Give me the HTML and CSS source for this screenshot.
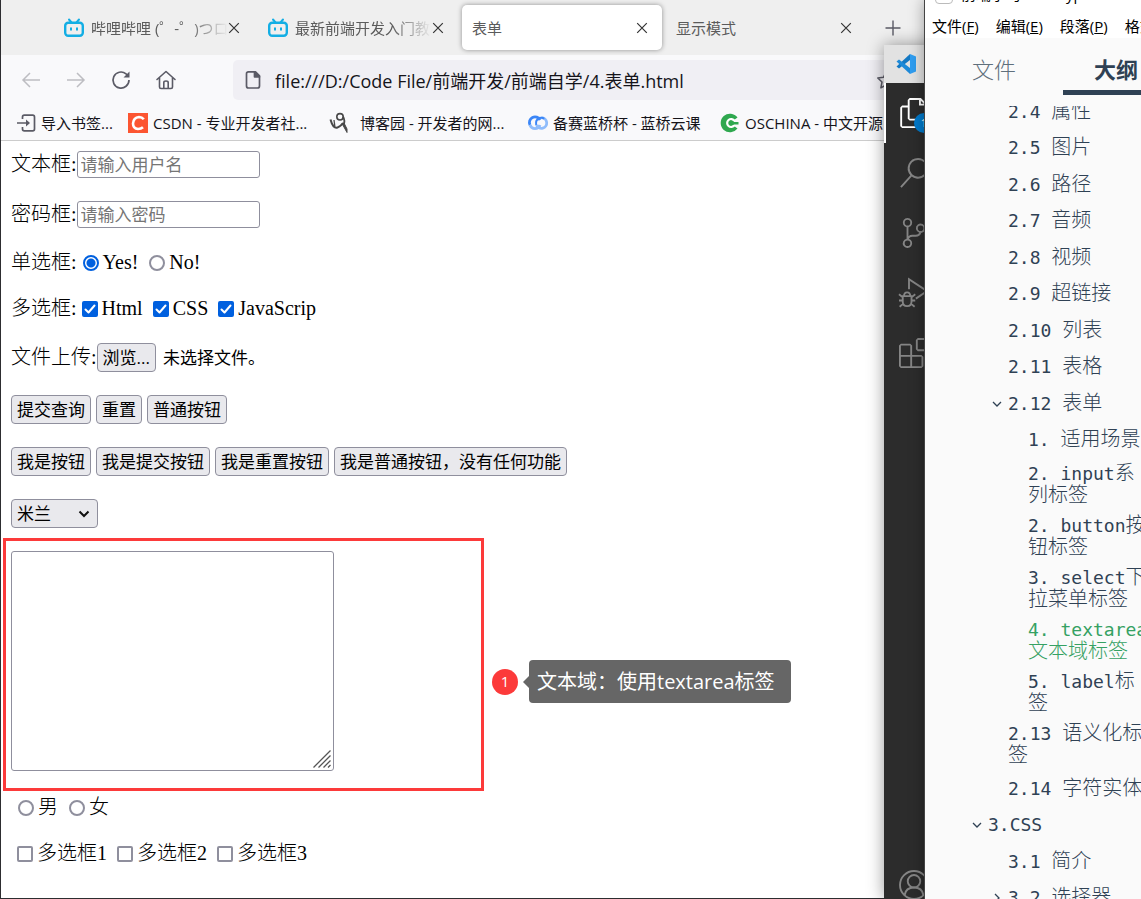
FILE: index.html
```html
<!DOCTYPE html>
<html lang="zh-CN">
<head>
<meta charset="utf-8">
<title>表单</title>
<link rel="stylesheet" href="styles.css">
</head>
<body>
<svg class="defs" aria-hidden="true">
  <symbol id="bili" viewBox="0 0 20 20"><path d="M5 1.5l2.5 3M15 1.5l-2.5 3" stroke="#13aee4" stroke-width="2" stroke-linecap="round"/><rect x="1.2" y="4.8" width="17.6" height="13" rx="3" fill="none" stroke="#13aee4" stroke-width="2.4"/><path d="M7 9.5v3M13 9.5v3" stroke="#13aee4" stroke-width="2"/></symbol>
  <symbol id="close" viewBox="0 0 12 12"><path d="M1.2 1.2l9.6 9.6M10.8 1.2l-9.6 9.6" stroke="#333" stroke-width="1.2"/></symbol>
  <symbol id="tick" viewBox="0 0 16 16"><path d="M3.5 8.5l3 3L12.500 4.500" fill="none" stroke="#fff" stroke-width="2" stroke-linecap="round" stroke-linejoin="round"/></symbol>
</svg>
<div class="desktop">
  <section class="window browser">
    <div class="tabs">
      <div class="tab"><svg class="ico20"><use href="#bili"/></svg><span class="tab-title fade">哔哩哔哩 (゜-゜)つロ</span><button class="tab-close" aria-label="关闭"><svg><use href="#close"/></svg></button></div>
      <div class="tab"><svg class="ico20"><use href="#bili"/></svg><span class="tab-title fade">最新前端开发入门教程</span><button class="tab-close" aria-label="关闭"><svg><use href="#close"/></svg></button></div>
      <div class="tab active"><span class="tab-title">表单</span><button class="tab-close" aria-label="关闭"><svg><use href="#close"/></svg></button></div>
      <div class="tab"><span class="tab-title">显示模式</span><button class="tab-close" aria-label="关闭"><svg><use href="#close"/></svg></button></div>
      <button class="new-tab" aria-label="新标签页"><svg class="ico16" viewBox="0 0 16 16"><path d="M8 .5v15M.5 8h15" stroke="#5b5b66" stroke-width="1.4"/></svg></button>
    </div>
    <div class="toolbar">
      <div class="nav">
        <button aria-label="后退"><svg class="ico20" viewBox="0 0 20 20" fill="none" stroke="#bdbdc2" stroke-width="1.5"><path d="M19 10H2M9 3l-7 7 7 7"/></svg></button>
        <button aria-label="前进"><svg class="ico20" viewBox="0 0 20 20" fill="none" stroke="#bdbdc2" stroke-width="1.500"><path d="M1 10h17M11 3l7 7-7 7"/></svg></button>
        <button aria-label="刷新"><svg class="ico20" viewBox="0 0 20 20" fill="none" stroke="#5b5b66" stroke-width="1.700"><path d="M18 10a8 8 0 1 1-3-6.200L17 6"/><path d="M18.500 1.500V7.500H12.500z" fill="#5b5b66" stroke="none"/></svg></button>
        <button aria-label="主页"><svg class="ico20" viewBox="0 0 20 20" fill="none" stroke="#5b5b66" stroke-width="1.600" stroke-linejoin="round" stroke-linecap="round"><path d="M1 9.500L10 1.500l9 8M3.500 7.500V17q0 1.500 1.500 1.500h10q1.500 0 1.500-1.500V7.500M7.800 18v-5.500q0-1.500 2.200-1.500t2.200 1.500V18"/></svg></button>
      </div>
      <div class="url"><svg class="ico20" viewBox="0 0 20 20" fill="none" stroke="#5b5b66" stroke-width="1.700" stroke-linejoin="round"><path d="M5 1.800h7.500l4 4V16q0 2-2 2h-9q-2 0-2-2V3.800q0-2 2-2z"/><path d="M11.500 1.800v5h5z" fill="#5b5b66"/></svg><input type="text" aria-label="地址" value="file:///D:/Code File/前端开发/前端自学/4.表单.html"><svg class="ico20 star" viewBox="0 0 20 20" fill="none" stroke="#5b5b66" stroke-width="1.500" stroke-linejoin="round"><path d="M10 2l2.500 5.300 5.700.7-4.200 4 1.100 5.800L10 15l-5.100 2.800L6 12 1.800 8l5.700-.7z"/></svg></div>
    </div>
    <nav class="bookmarks">
      <a href="#"><svg class="ico20" viewBox="0 0 20 20" fill="none" stroke="#5b5b66" stroke-width="1.700"><path d="M6.500 6V4q0-1.800 1.800-1.800h8.400q1.800 0 1.800 1.800v12q0 1.800-1.800 1.800H8.300Q6.500 17.800 6.500 16v-2M1 10h12"/><path d="M10 6.500v7l4-3.500z" fill="#5b5b66" stroke="none"/></svg>导入书签...</a>
      <a href="#"><svg class="ico20" viewBox="0 0 20 20"><path fill="#fc5531" d="M0 0h20v20H0z"/><path d="M15.800 6.200Q14 4 11 4 5.500 4.500 5 10.500q0 5 5 5.500 3 0 5-1.800" fill="none" stroke="#fff" stroke-width="2.600"/></svg>CSDN - 专业开发者社...</a>
      <a href="#" class="wide-icon"><svg class="ico20" viewBox="0 0 20 20" fill="none" stroke="#484848"><circle cx="10" cy="3.800" r="3.200" stroke-width="1.600"/><path d="M13 3.500q2.500 4.500.5 8.500" stroke-width="1.800"/><path d="M13 10q-3 4-5.500 4.500Q3 16 .5 6.500" stroke-width="2"/><path d="M4 7l.8 6" stroke-width="1.300"/><path d="M12 10.500l5 9V16l-3-6z" fill="#484848" stroke-width="1"/></svg>博客园 - 开发者的网...</a>
      <a href="#"><svg class="ico20" viewBox="0 0 20 20" fill="none" stroke-width="2.800"><path d="M12 7A5.300 5.300 0 1 0 2 12" stroke="#3b86f7"/><path d="M2 12a5.300 5.300 0 0 0 10 0" stroke="#8fbcfb"/><path d="M8.500 12a5.300 5.300 0 1 0 5-7.300" stroke="#8fbcfb"/><path d="M8.200 12q-1-5 3-7 3-1 5 .8" stroke="#3b86f7" stroke-width="2"/></svg>备赛蓝桥杯 - 蓝桥云课</a>
      <a href="#"><svg class="ico20" viewBox="0 0 20 20"><path d="M17.500 4.500A9.300 9.300 0 1 0 17.500 15.500L14 13V7z" fill="#2fa84f"/><path d="M14.500 7.800a4 4 0 1 0 0 4.400" fill="none" stroke="#fff" stroke-width="2.200"/><path d="M10.500 9h8v2.500h-8z" fill="#2fa84f"/></svg>OSCHINA - 中文开源</a>
    </nav>
    <form class="page">
      <div class="row field"><label for="user">文本框:</label><input class="text" id="user" type="text" placeholder="请输入用户名"></div>
      <div class="row field"><label for="pwd">密码框:</label><input class="text" id="pwd" type="password" placeholder="请输入密码"></div>
      <div class="row choices"><span class="legend">单选框:</span>
        <label><input type="radio" name="yn" checked>Yes!</label><label><input type="radio" name="yn">No!</label></div>
      <div class="row choices"><span class="legend">多选框:</span>
        <label><span class="box"><input type="checkbox" checked><svg><use href="#tick"/></svg></span>Html</label><label><span class="box"><input type="checkbox" checked><svg><use href="#tick"/></svg></span>CSS</label><label><span class="box"><input type="checkbox" checked><svg><use href="#tick"/></svg></span>JavaScrip</label></div>
      <div class="row field"><span>文件上传:</span><label class="btn file" for="upload">浏览...</label><input class="file-input" id="upload" type="file"><span class="file-name">未选择文件。</span></div>
      <div class="row buttons"><button class="btn" type="submit">提交查询</button><button class="btn" type="reset">重置</button><button class="btn" type="button">普通按钮</button></div>
      <div class="row buttons"><button class="btn">我是按钮</button><button class="btn" type="submit">我是提交按钮</button><button class="btn" type="reset">我是重置按钮</button><button class="btn" type="button">我是普通按钮，没有任何功能</button></div>
      <div class="row"><span class="select"><select class="btn" aria-label="城市"><option>米兰</option></select><svg viewBox="0 0 12 8" fill="none" stroke="#111" stroke-width="2"><path d="M1.500 1.500L6 6l4.500-4.500"/></svg></span></div>
      <div class="row area">
        <span class="area-box"><textarea aria-label="文本域"></textarea><svg class="grip" viewBox="0 0 18 18" stroke="#555" stroke-width="1.300"><path d="M.5 17.500l17-17M5.500 17.500l12-12M10.500 17.500l7-7M15 17.500l2.500-2.500"/></svg></span>
        <div class="frame"></div>
        <div class="note"><span class="badge">1</span><span class="tip">文本域：使用textarea标签</span></div>
      </div>
      <div class="row choices indent"><label><input type="radio" name="sex">男</label><label><input type="radio" name="sex">女</label></div>
      <div class="row choices indent"><label><span class="box"><input type="checkbox"></span>多选框1</label><label><span class="box"><input type="checkbox"></span>多选框2</label><label><span class="box"><input type="checkbox"></span>多选框3</label></div>
    </form>
  </section>

  <section class="window editor">
    <div class="editor-title"><svg class="ico20" viewBox="0 0 20 20"><path d="M14 0l6 2.500v15L14 20z" fill="#2f9df0"/><path d="M14 0v6L3 14.500.5 12.500z" fill="#1479c4"/><path d="M14 20v-6L3 5.500.5 7.500z" fill="#1e8ad8"/></svg></div>
    <div class="activity">
      <button class="on" aria-label="资源管理器"><svg viewBox="0 0 24 24"><path d="M17.500 0h-9L7 1.500V6H2.500L1 7.500v15.070L2.500 24h12.070L16 22.570V18h4.700l1.300-1.430V4.500L17.500 0zm0 2.120l2.380 2.380H17.500V2.120zm-3 20.380h-12v-15H7v9.070L8.500 18h6v4.500zm6-6h-12v-15H16V6h4.500v10.500z"/></svg><span class="count">1</span></button>
      <button aria-label="搜索"><svg viewBox="0 0 24 24"><path d="M15.250 0a8.250 8.250 0 0 0-6.180 13.720L1 22.880l1.120 1 8.050-9.120A8.251 8.251 0 1 0 15.250.01V0zm0 15a6.750 6.750 0 1 1 0-13.500 6.750 6.750 0 0 1 0 13.500z"/></svg></button>
      <button aria-label="源代码管理"><svg viewBox="0 0 24 24"><path d="M21.007 8.222A3.738 3.738 0 0 0 15.045 5.200a3.737 3.737 0 0 0 1.156 6.583 2.988 2.988 0 0 1-2.668 1.670h-2.990a4.456 4.456 0 0 0-2.989 1.165V7.400a3.737 3.737 0 1 0-1.494 0v9.117a3.776 3.776 0 1 0 1.816.099 2.990 2.990 0 0 1 2.668-1.667h2.990a4.484 4.484 0 0 0 4.223-3.039 3.736 3.736 0 0 0 3.250-3.687zM4.565 3.738a2.242 2.242 0 1 1 4.484 0 2.242 2.242 0 0 1-4.484 0zm4.484 16.441a2.242 2.242 0 1 1-4.484 0 2.242 2.242 0 0 1 4.484 0zm8.221-9.715a2.242 2.242 0 1 1 0-4.485 2.242 2.242 0 0 1 0 4.485z"/></svg></button>
      <button aria-label="运行和调试"><svg viewBox="0 0 24 24" class="line"><path d="M8 9V1l14.500 9.500-9 6"/><path d="M3 14.500h7v4.500q0 3.500-3.500 3.500T3 19zM4 14.500q0-3 2.500-3t2.500 3M0 13l3 2.500M13 13l-3 2.500M0 18h3M10 18h3M.5 23l3-2.500M12.500 23l-3-2.500"/></svg></button>
      <button aria-label="扩展"><svg viewBox="0 0 24 24"><path d="M13.500 1.500L15 0h7.500L24 1.500V9l-1.500 1.500H15L13.500 9V1.500zm1.500 0V9h7.500V1.500H15zM0 15V6l1.500-1.500H9L10.500 6v7.500H18l1.500 1.500v7.500L18 24H1.500L0 22.500V15zm9-1.500V6H1.500v7.500H9zM9 15H1.500v7.500H9V15zm1.500 7.500H18V15h-7.500v7.500z"/></svg></button>
      <button class="account" aria-label="帐户"><svg viewBox="0 0 24 24" class="line"><circle cx="12" cy="12" r="11.200"/><circle cx="12" cy="9" r="5"/><path d="M4.500 20q1-6 7.500-6t7.500 6"/></svg></button>
    </div>
  </section>

  <section class="window notes">
    <div class="notes-title"><span class="doc"></span><span>前端学习</span><span>- Typora</span></div>
    <div class="menu"><button>文件(<u>F</u>)</button><button>编辑(<u>E</u>)</button><button>段落(<u>P</u>)</button><button>格式(<u>O</u>)</button></div>
    <div class="side-tabs"><button>文件</button><button class="on">大纲</button></div>
    <div class="outline">
      <ul>
        <li class="l2"><a href="#"><b>2.4 </b>属性</a></li>
        <li class="l2"><a href="#"><b>2.5 </b>图片</a></li>
        <li class="l2"><a href="#"><b>2.6 </b>路径</a></li>
        <li class="l2"><a href="#"><b>2.7 </b>音频</a></li>
        <li class="l2"><a href="#"><b>2.8 </b>视频</a></li>
        <li class="l2"><a href="#"><b>2.9 </b>超链接</a></li>
        <li class="l2"><a href="#"><b>2.10 </b>列表</a></li>
        <li class="l2"><a href="#"><b>2.11 </b>表格</a></li>
        <li class="l2"><svg viewBox="0 0 10 10"><path d="M1 3l4 4 4-4"/></svg><a href="#"><b>2.12 </b>表单</a></li>
        <li class="l3"><a href="#"><b>1. </b>适用场景</a></li>
        <li class="l3 tall"><a href="#"><b>2. input</b>系列标签</a></li>
        <li class="l3 tall"><a href="#"><b>2. button</b>按钮标签</a></li>
        <li class="l3 tall"><a href="#"><b>3. select</b>下拉菜单标签</a></li>
        <li class="l3 tall current"><a href="#"><b>4. textarea</b>文本域标签</a></li>
        <li class="l3 tall"><a href="#"><b>5. label</b>标签</a></li>
        <li class="l2 tall"><a href="#"><b>2.13 </b>语义化标签</a></li>
        <li class="l2"><a href="#"><b>2.14 </b>字符实体</a></li>
        <li class="l1"><svg viewBox="0 0 10 10"><path d="M1 3l4 4 4-4"/></svg><a href="#"><b>3.CSS</b></a></li>
        <li class="l2"><a href="#"><b>3.1 </b>简介</a></li>
        <li class="l2"><svg viewBox="0 0 10 10"><path d="M3 1l4 4-4 4"/></svg><a href="#"><b>3.2 </b>选择器</a></li>
      </ul>
    </div>
  </section>
</div>
</body>
</html>
```
FILE: styles.css
```css
* { box-sizing: border-box; }
body {
  margin: 0;
  font-family: "Open Sans", "Noto Sans CJK SC", sans-serif;
  font-size: 15px;
  color: #15141a;
}
button, input, select, textarea { font: inherit; color: inherit; margin: 0; }
button { background: none; border: 0; padding: 0; }
a { color: inherit; text-decoration: none; }
svg { display: block; flex: none; overflow: visible; }
.defs { position: absolute; width: 0; height: 0; }
.ico20 { width: 20px; height: 20px; }
.ico16 { width: 16px; height: 16px; }

/* Windows on the desktop */
.desktop { position: relative; height: 100vh; overflow: hidden; background: #2c2c2c; }
.window { position: absolute; bottom: 0; overflow: hidden; }
.browser { inset: 0; background: #fff; border-left: 1px solid #2d2d30; border-bottom: 1px solid #2d2d30; }
.editor { top: 45px; right: 197px; width: 60px; background: #2c2c2c; box-shadow: 0 0 16px rgba(0, 0, 0, .4); }
.notes { top: 0; right: 0; width: 217px; background: #fafafa; border-left: 1px solid #444; box-shadow: 0 0 14px rgba(0, 0, 0, .35); }

/* Browser chrome */
.tabs { display: flex; gap: 4px; padding: 5px 0 5px 53px; background: #efefef; }
.tab { display: flex; align-items: center; width: 200px; height: 45px; padding: 0 14px 0 10px; border-radius: 5px; color: #5b5b5b; flex: none; }
.tab .ico20 { margin-right: 7px; }
.tab.active { background: #fff; box-shadow: 0 0 5px rgba(0, 0, 0, .4); }
.tab-title { flex: 1; min-width: 0; overflow: hidden; white-space: nowrap; line-height: 20px; }
.fade { -webkit-mask-image: linear-gradient(to left, transparent, #000 40px); mask-image: linear-gradient(to left, transparent, #000 40px); }
.tab-close svg { width: 12px; height: 12px; }
.new-tab { padding: 0 15px; }
.toolbar { display: flex; align-items: center; padding: 5px 0; background: #f9f9fb; }
.nav { display: flex; gap: 25px; padding-left: 20px; width: 232px; flex: none; }
.url { display: flex; align-items: center; gap: 12px; flex: 1; height: 40px; padding: 0 10px; margin-right: 235px; background: #f0eff4; border-radius: 5px; }
.url input { flex: 1; min-width: 0; border: 0; padding: 0; background: none; font-size: 18px; }
.bookmarks { display: grid; grid-template-columns: 96px 186px 182px 176px auto; gap: 16px; align-items: center; height: 36px; padding: 0 15px; background: #f9f9fb; border-bottom: 1px solid #ccc; white-space: nowrap; line-height: 20px; }
.bookmarks a { display: flex; align-items: center; gap: 5px; }
.bookmarks .wide-icon { gap: 10px; }

/* Form page */
.page { display: flex; flex-direction: column; gap: 23px; padding: 10px; font-family: "Liberation Serif", "Noto Sans CJK SC", serif; font-size: 20px; line-height: 23px; font-weight: 300; color: #000; }
.row { display: flex; align-items: center; white-space: nowrap; }
.text { width: 183px; height: 27px; padding: 0 3px; border: 1px solid #8f8f9d; border-radius: 3px; font: 17px "Open Sans", "Noto Sans CJK SC", sans-serif; }
.text::placeholder { color: #757575; }
.choices { gap: 10px; }
.legend { margin-right: -5px; }
.choices label { display: flex; align-items: center; gap: 4px; }
.indent { padding-left: 6px; }
.choices input { appearance: none; display: block; width: 16px; height: 16px; border: 2px solid #8f8f9d; background: #fff; }
.choices input[type="radio"] { margin-left: 1px; border-radius: 50%; }
.choices input[type="radio"]:checked { border-color: #0060df; background: radial-gradient(#0060df 4px, #fff 5px); }
.choices input[type="checkbox"] { border-radius: 2px; }
.choices input[type="checkbox"]:checked { border-color: #0060df; background: #0060df; }
.box { position: relative; }
.box svg { position: absolute; inset: 0; width: 16px; height: 16px; pointer-events: none; }
.buttons { gap: 5px; }
.btn { height: 29px; padding: 0 5px; border: 1px solid #8f8f9d; border-radius: 4px; background: #e9e9ed; font: 17px/28px "Open Sans", "Noto Sans CJK SC", sans-serif; color: #000; }
.file-input { position: absolute; width: 1px; height: 1px; opacity: 0; }
.file-name { padding-left: 7px; font: 17px/28px "Open Sans", "Noto Sans CJK SC", sans-serif; }
.select { position: relative; }
.select select { display: block; appearance: none; width: 87px; }
.select svg { position: absolute; right: 8px; top: 11px; width: 12px; height: 8px; pointer-events: none; }
.area { position: relative; padding-bottom: 2px; }
.area-box { position: relative; }
.area textarea { display: block; width: 323px; height: 220px; border: 1px solid #8f8f9d; border-radius: 3px; resize: none; background: #fff; }
.grip { position: absolute; right: 3px; bottom: 3px; width: 18px; height: 18px; pointer-events: none; }
.frame { position: absolute; left: -8px; top: -13px; bottom: -18px; width: 481px; border: 3px solid #fc3a3a; pointer-events: none; }
.note { position: absolute; left: 481px; top: 109px; display: flex; align-items: center; gap: 11px; font-family: "Open Sans", "Noto Sans CJK SC", sans-serif; font-weight: 400; color: #fff; }
.badge { width: 26px; height: 26px; border-radius: 50%; background: #fc3a3a; font-size: 15px; line-height: 25px; text-align: center; }
.tip { position: relative; padding: 10px 16px 10px 8px; border-radius: 4px; background: #666; }
.tip::before { content: ""; position: absolute; right: 100%; top: 16px; border: 6px solid transparent; border-left: 0; border-right-color: #666; }

/* Code editor */
.editor-title { height: 38px; padding: 9px 12px; background: #e2e2e2; }
.activity { display: flex; flex-direction: column; height: calc(100% - 38px); background: #2c2c2c; }
.activity button { position: relative; height: 60px; padding-left: 15px; flex: none; }
.activity svg { width: 30px; height: 30px; fill: #858585; }
.activity .line { fill: none; stroke: #858585; stroke-width: 1.500; }
.activity .on { padding-left: 13px; border-left: 2px solid #fff; }
.activity .on svg { fill: #fff; }
.count { position: absolute; left: 28px; top: 30px; width: 20px; height: 20px; border-radius: 50%; background: #007acc; color: #fff; font-size: 11px; line-height: 20px; text-align: center; }
.activity .account { height: 29px; margin-top: auto; }

/* Notes app */
.notes-title { display: flex; align-items: flex-end; height: 10px; padding-left: 10px; background: #fff; line-height: 22px; gap: 28px; white-space: nowrap; overflow: hidden; }
.notes-title span { margin-bottom: 5px; color: #000; }
.notes-title .doc { width: 18px; height: 22px; margin: 0 -20px 6px 0; border: 1px solid #bbb; border-radius: 4px; }
.menu { display: flex; gap: 17px; height: 28px; padding: 0 7px; background: #fff; white-space: nowrap; }
.menu button { flex: none; line-height: 32px; height: 28px; color: #000; }
.side-tabs { display: flex; height: 57px; font-size: 22px; color: #5f6f7c; }
.side-tabs button { width: 138px; line-height: 62px; flex: none; border-bottom: 5px solid transparent; font-weight: 300; }
.side-tabs .on { width: 106px; font-weight: 700; color: #2f4154; border-color: #2f4154; }
.outline { height: calc(100vh - 106px); margin-top: 11px; overflow: hidden; }
.outline ul { list-style: none; margin: -13px -12px 0 0; padding: 0; font-size: 20px; line-height: 22px; font-weight: 300; color: #2f4154; }
.outline li { display: flex; padding: 7px 0; }
.outline li:nth-child(even) { padding-bottom: 8px; }
.outline li.tall { padding: 4px 0; }
.outline b { font: 18px/18px "DejaVu Sans Mono", monospace; white-space: pre; }
.outline svg { width: 10px; height: 10px; margin: 7px 6px 0 -16px; fill: none; stroke: #2f4154; stroke-width: 1.300; }
.l1 { margin-left: 63px; }
.l2 { margin-left: 83px; }
.l3 { margin-left: 103px; }
.current { color: #35a163; }
```
